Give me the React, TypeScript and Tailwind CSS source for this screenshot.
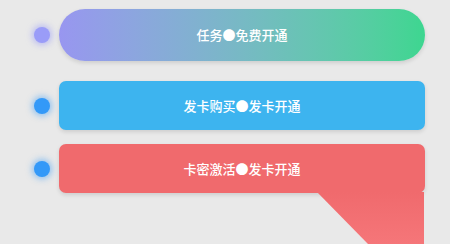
import React from "react";

const font = { fontFamily: '"Noto Sans CJK SC", "Noto Sans", sans-serif' };

export default function App() {
  return (
    <div className="relative w-[450px] h-[244px] overflow-hidden bg-[#e9e9e9]" style={font}>
      <div className="flex flex-col pl-[34px] pt-[9px]">
        <div className="flex items-center gap-[9px]">
          <div className="w-[16px] h-[16px] rounded-full bg-[#9a9cf8] shadow-[0_0_6px_2px_rgba(154,156,248,0.6)]" />
          <div className="w-[366px] h-[52px] rounded-[26px] bg-gradient-to-r from-[#9896f0] to-[#3dd690] shadow-[0_2px_4px_rgba(0,0,0,0.12)] flex items-center justify-center text-white text-[13px] font-medium">
            任务●免费开通
          </div>
        </div>
        <div className="flex items-center gap-[9px] mt-[20px]">
          <div className="w-[16px] h-[16px] rounded-full bg-[#3399f8] shadow-[0_0_6px_2px_rgba(51,153,248,0.5)]" />
          <div className="w-[366px] h-[49px] rounded-[7px] bg-[#3db4ef] shadow-[0_2px_4px_rgba(0,0,0,0.12)] flex items-center justify-center text-white text-[13px] font-medium">
            发卡购买●发卡开通
          </div>
        </div>
        <div className="flex items-center gap-[9px] mt-[14px]">
          <div className="w-[16px] h-[16px] rounded-full bg-[#3399f8] shadow-[0_0_6px_2px_rgba(51,153,248,0.5)]" />
          <div className="w-[366px] h-[49px] rounded-[7px] bg-[#f06a6d] shadow-[0_2px_4px_rgba(0,0,0,0.12)] flex items-center justify-center text-white text-[13px] font-medium">
            卡密激活●发卡开通
          </div>
        </div>
      </div>
      <svg className="absolute left-0 top-0" width="450" height="244" viewBox="0 0 450 244">
        <defs>
          <linearGradient id="pk" x1="0" y1="0" x2="0" y2="1">
            <stop offset="0" stopColor="#f06a6d" />
            <stop offset="1" stopColor="#f57679" />
          </linearGradient>
        </defs>
        <polygon points="317,192 424,192 424,244 368,244" fill="url(#pk)" />
      </svg>
    </div>
  );
}
